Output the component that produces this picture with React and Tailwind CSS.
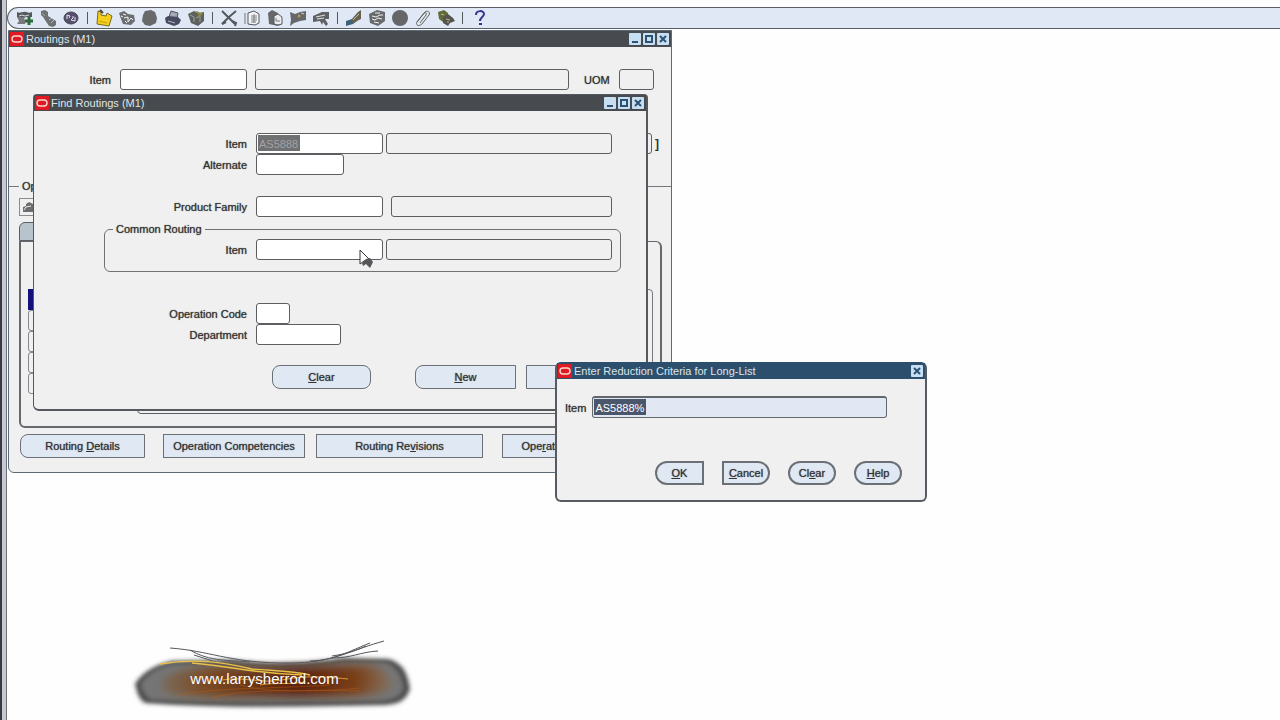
import clsx from "clsx";

const INK = "#55585c";

// Toolbar glyphs, all drawn on an 18x18 grid
const toolbarItems = [
  {
    name: "New",
    art: (
      <>
        <path d="M1 3c3 2 6-1 9 0s4 1 6 0v5H1z" fill={INK} />
        <path d="M1 8h9l-2 2 2 2-1 3H1l2-3z" fill="#77797c" />
        <path d="M3 7l3-1 3 1 4-1" stroke="#d5d9de" fill="none" />
        <path d="M13 8v8M9 12h8" stroke="#2c6a3b" strokeWidth="3" />
      </>
    ),
  },
  {
    name: "Find",
    art: (
      <>
        <path d="M2 2l4-1 3 2v4l8 5v4l-3 2-4-1-6-9-2-2z" fill="#6f7173" />
        <path d="M10 11l3-2M12 14l3-3" stroke="#b9bcc0" />
        <path d="M3 4l3 3" stroke="#9da0a3" />
      </>
    ),
  },
  {
    name: "Show Navigator",
    art: (
      <>
        <ellipse cx="9" cy="9" rx="7" ry="6" fill="#56506e" stroke="#44464e" />
        <path d="M5 10V6l3 1-1 2M13 8v4l-4-1 2-2V7" stroke="#e5e3f5" fill="none" />
      </>
    ),
  },
  { separator: true, name: "sep-1" },
  {
    name: "Save",
    art: (
      <>
        <path d="M3 2l3 1v3l5 1 1-3 5 3-3 10-12-2z" fill="#f5cf1e" stroke="#77691f" />
        <path d="M4 12l8 2" stroke="#c79d16" />
        <path d="M5 1l3 3" stroke="#4a4a3c" strokeWidth="2" />
      </>
    ),
  },
  {
    name: "Next Step",
    art: (
      <>
        <path d="M1 4l5-2 4 3 6 1 1 6-4 4-8-1-2-5z" fill="#6c6e70" />
        <path d="M5 5l3 1M6 9l4-1v5l3-4 2 2M7 12l2 2M3 7l2 1" stroke="#f1f3f6" fill="none" />
      </>
    ),
  },
  {
    name: "Switch Responsibility",
    art: <path d="M4 2l6-1 4 2 2 6-1 5-6 3-5-1-3-4 1-6z" fill="#67696b" />,
  },
  {
    name: "Print",
    art: (
      <>
        <path d="M5 8l2-6 7 2-1 6z" fill="#9fa2b0" stroke="#53545f" />
        <path d="M1 9l3-2 10 1 3 3-2 4-5 2-8-3z" fill="#484a60" />
        <path d="M4 12l7 2M7 5l4 1" stroke="#b4b8cc" />
      </>
    ),
  },
  {
    name: "Close Form",
    art: (
      <>
        <path d="M1 5l6-3 5 2 5-1v9l-6 5-7-3z" fill="#5c605e" />
        <path d="M3 6l4 2v5M9 9l4-2v6" stroke="#9da29b" fill="none" />
        <path d="M9 3l5 2-3 3" stroke="#8f8b45" strokeWidth="2" fill="none" />
      </>
    ),
  },
  { separator: true, name: "sep-2" },
  {
    name: "Cut",
    art: (
      <>
        <path d="M2 2l6 6 7 7M16 2L9 8l-7 7" stroke={INK} strokeWidth="2" fill="none" />
        <path d="M2 15l4-2M12 12l4 2-1 3" stroke={INK} strokeWidth="2" fill="none" />
      </>
    ),
  },
  {
    name: "Copy",
    art: (
      <>
        <path d="M2 4v11" stroke="#77797c" />
        <path d="M5 4l6-2 5 3v9l-4 2-7-1z" fill="#f4f5f7" stroke={INK} />
        <path d="M8 7h6M8 9h6M8 11h6M8 13h5M11 5v9" stroke="#7e8083" />
      </>
    ),
  },
  {
    name: "Paste",
    art: (
      <>
        <path d="M2 4l4-3 6 3v4l4 1v6l-4 2-9-2z" fill="#66686a" />
        <path d="M8 7l4-2 4 3v7l-4 1-4-1z" fill="#eceef0" stroke={INK} />
        <path d="M10 9v3h4" stroke="#77797c" fill="none" />
      </>
    ),
  },
  {
    name: "Clear Record",
    art: (
      <>
        <path d="M1 3l5 2 5-2 6-1v9l-6 1-6 2-4 3 1-6z" fill="#65676a" />
        <path d="M9 5l3 2-3 2" fill="#c09a57" />
        <path d="M12 4l3 1" stroke="#c9ccd0" />
      </>
    ),
  },
  {
    name: "Delete",
    art: (
      <>
        <path d="M1 7l9-4 7 0v7h-4l3 5-2 2-3-4-1 3-2-4-7 1z" fill="#5f6163" />
        <path d="M4 8l9-2M5 10l7-1" stroke="#e0e3e7" />
      </>
    ),
  },
  { separator: true, name: "sep-3" },
  {
    name: "Edit Field",
    art: (
      <>
        <path d="M1 12l6-2 5 2-4 3-7 2z" fill="#3f6079" />
        <path d="M6 11l7-8 3-2v9l-8 4z" fill="#67624f" />
        <path d="M8 11l6-6" stroke="#c1bda9" />
      </>
    ),
  },
  {
    name: "Zoom",
    art: (
      <>
        <path d="M1 5l8-4 8 2v9l-7 5-8-3z" fill="#68696b" />
        <path d="M4 7l4 1 4-2 3 0M4 10l3 1 3-2 4 1M6 13l5 1M7 4l5 0" stroke="#f0f2f4" fill="none" />
      </>
    ),
  },
  { name: "Translations", art: <circle cx="9" cy="9" r="8" fill="#646668" /> },
  {
    name: "Attachments",
    art: (
      <path
        d="M3 13L11 3c2-2 6 0 4 3l-7 9c-3 3-7 1-5-2l7-9c2-1 3 0 2 2l-6 8"
        stroke="#65635c"
        fill="none"
      />
    ),
  },
  {
    name: "Folder Tools",
    art: (
      <>
        <path d="M1 3l6-2 4 3v5l-5 4-4-3z" fill="#626a3a" />
        <path d="M6 8l5-3 5 4 2 3-5 2-2 3-5-3z" fill="#55534d" />
        <path d="M4 5l3 1M9 10l4 1M11 12v2" stroke="#b7b98f" fill="none" />
      </>
    ),
  },
  { separator: true, name: "sep-4" },
  {
    name: "Window Help",
    art: (
      <>
        <path
          d="M6 6c0-5 8-5 8-1 0 3-4 3-4 7"
          stroke="#33348c"
          strokeWidth="2"
          fill="none"
        />
        <path d="M9 14h3v2H9z" fill="#33348c" />
      </>
    ),
  },
];

function Toolbar() {
  return (
    <header className="flex h-[22px] items-center rounded-l-xl border border-r-0 border-[#5b6066] bg-[#dfe8f4] pl-2">
      {toolbarItems.map((item) =>
        item.separator ? (
          <span key={item.name} className="ml-[2px] mr-[7px] h-3 w-px bg-[#55585c]" />
        ) : (
          <button key={item.name} type="button" title={item.name} aria-label={item.name} className="mr-[5px] shrink-0">
            <svg viewBox="0 0 18 18" className="h-[18px] w-[18px]">
              {item.art}
            </svg>
          </button>
        )
      )}
    </header>
  );
}

function OracleMark() {
  return (
    <svg viewBox="0 0 14 14" className="h-[14px] w-[14px] shrink-0">
      <rect width="14" height="14" fill="#e01a22" />
      <rect x="2" y="4" width="10" height="6" rx="3" fill="none" stroke="#f7d9cf" strokeWidth="1.4" />
    </svg>
  );
}

function WindowControl({ label, children }) {
  return (
    <button type="button" aria-label={label} className="h-3 w-3 rounded-[1px] bg-[#c6dff2]">
      <svg viewBox="0 0 12 12" className="h-3 w-3" stroke="#2d5273" strokeWidth="2" fill="none">
        {children}
      </svg>
    </button>
  );
}

function TitleBar({ title, closeOnly, className }) {
  return (
    <div className={clsx("flex h-4 items-center gap-[2px] pl-px pr-[2px]", className)}>
      <OracleMark />
      <h2 className="flex-1 truncate text-[11px] leading-4 text-[#dfe4e8]">{title}</h2>
      <div className="flex gap-[2px]">
        {!closeOnly && (
          <>
            <WindowControl label="Minimize">
              <path d="M3 9h6" />
            </WindowControl>
            <WindowControl label="Maximize">
              <path d="M3 3h6v6H3z" />
            </WindowControl>
          </>
        )}
        <WindowControl label="Close">
          <path d="M3 3l6 6M9 3l-6 6" />
        </WindowControl>
      </div>
    </div>
  );
}

const labelText = "text-[11px] leading-[15px] text-[#333] [text-shadow:0_0_1px_#555]";

function Label({ htmlFor, className, children }) {
  return (
    <label htmlFor={htmlFor} className={clsx("mr-[9px] shrink-0 pt-[2px] text-right", labelText, className)}>
      {children}
    </label>
  );
}

function TextField({ id, className, readOnly, ...rest }) {
  return (
    <input
      id={id}
      type="text"
      readOnly={readOnly}
      className={clsx(
        "h-[21px] shrink-0 rounded-[3px] border border-[#5c5e61] px-[2px] text-[11px] outline-none",
        readOnly ? "bg-[#f0f0f0]" : "bg-white",
        className
      )}
      {...rest}
    />
  );
}

function FormButton({ className, children, ...rest }) {
  return (
    <button
      type="button"
      className={clsx(
        "h-6 shrink-0 border border-[#6b7076] bg-[#dfe8f3] whitespace-nowrap",
        labelText,
        className
      )}
      {...rest}
    >
      {children}
    </button>
  );
}

function RoutingsWindow() {
  return (
    <section className="absolute left-[1px] top-[1px] w-[664px] rounded-b-md border border-[#5b6b78] bg-[#f0f0f0]">
      <TitleBar title="Routings (M1)" className="bg-[#474b4f]" />
      <div className="flex items-center pt-[22px]">
        <Label htmlFor="routing-item" className="w-[102px]">Item</Label>
        <TextField id="routing-item" className="w-[127px]" />
        <TextField aria-label="Item description" className="ml-2 w-[314px]" readOnly />
        <Label htmlFor="uom" className="ml-[15px]">UOM</Label>
        <TextField id="uom" className="w-[35px]" readOnly />
      </div>
      <div className="mt-[43px] flex items-center justify-end pr-3">
        <TextField aria-label="Revision date" className="w-[140px]" readOnly />
        <span className="ml-[3px] text-xs font-bold text-[#333]">]</span>
      </div>

      <fieldset className="mt-[25px] border-t border-[#77797c] pl-[10px] pr-[9px]">
        <legend className={clsx("px-[3px]", labelText)}>Operations</legend>
        <button type="button" aria-label="Folder" className="mt-[4px] flex h-[18px] w-[18px] items-center justify-center border border-[#8a8c8f]">
          <svg viewBox="0 0 14 14" className="h-[14px] w-[14px]">
            <path d="M2 12V7l3-1V4l3-2 4 2v8z" fill="#6b6d70" />
            <path d="M3 10l2-3 5-1" stroke="#eee" fill="none" />
          </svg>
        </button>
        <div className="mt-[6px] h-[19px] w-[60px] rounded-tl-md border border-[#5c6064] bg-[#b8c4cc]" />
        <div className="rounded-b-md rounded-tr-md border-2 border-t border-[#65686c] px-[7px] pb-[12px] pt-[47px]">
          <div className="flex justify-between">
            <div className="flex flex-col">
              <input aria-label="Operation row 1" className="h-[21px] w-[60px] bg-[#14127a]" />
              {[2, 3, 4, 5].map((row) => (
                <input key={row} aria-label={`Operation row ${row}`} className="h-[21px] w-[60px] rounded-[3px] border border-[#85878a]" />
              ))}
            </div>
            <div className="w-[10px] rounded border border-[#77797c]" />
          </div>
          <div className="ml-[109px] mt-[10px] h-[10px] w-[480px] rounded-bl border border-[#5c6064]" />
        </div>
      </fieldset>

      <div className="flex overflow-hidden pb-[14px] pl-[11px] pt-[6px]">
        <FormButton className="w-[125px] rounded-l-lg">Routing <u>D</u>etails</FormButton>
        <FormButton className="ml-[18px] w-[142px]">Operation Competencies</FormButton>
        <FormButton className="ml-[11px] w-[167px]">Routing Re<u>v</u>isions</FormButton>
        <FormButton className="ml-[19px] w-[124px]">Ope<u>r</u>ation Details</FormButton>
      </div>
    </section>
  );
}

function FindRoutingsWindow() {
  return (
    <section className="absolute left-[26px] top-[65px] w-[615px] rounded-b-md rounded-t border border-b-2 border-r-2 border-[#55595e] bg-[#f0f0f0]">
      <TitleBar title="Find Routings (M1)" className="bg-[#474b4f]" />
      <div className="flex items-center pt-[22px]">
        <Label htmlFor="find-item" className="w-[213px]">Item</Label>
        <TextField
          id="find-item"
          defaultValue="AS5888"
          className="w-[127px] bg-[linear-gradient(#6f7071,#6f7071)] bg-[length:42px_16px] bg-[position:1px_1px] bg-no-repeat text-[#a2a3a4]"
        />
        <TextField aria-label="Find item description" className="ml-[3px] w-[226px]" readOnly />
      </div>
      <div className="flex items-center">
        <Label htmlFor="alternate" className="w-[213px]">Alternate</Label>
        <TextField id="alternate" className="w-[88px]" />
      </div>
      <div className="mt-[21px] flex items-center">
        <Label htmlFor="family" className="w-[213px]">Product Family</Label>
        <TextField id="family" className="w-[127px]" />
        <TextField aria-label="Family description" className="ml-2 w-[221px]" readOnly />
      </div>

      <fieldset className="ml-[70px] mt-[5px] w-[517px] rounded-md border border-[#6f7174] pb-[11px]">
        <legend className={clsx("ml-2 px-[3px]", labelText)}>Common Routing</legend>
        <div className="flex items-center pt-[2px]">
          <Label htmlFor="common-item" className="w-[142px]">Item</Label>
          <TextField id="common-item" className="w-[127px]" />
          <TextField aria-label="Common item description" className="ml-[3px] w-[226px]" readOnly />
        </div>
      </fieldset>

      <div className="mt-[31px] flex items-center">
        <Label htmlFor="op-code" className="w-[213px]">Operation Code</Label>
        <TextField id="op-code" className="w-[34px]" />
      </div>
      <div className="flex items-center">
        <Label htmlFor="department" className="w-[213px]">Department</Label>
        <TextField id="department" className="w-[85px]" />
      </div>

      <div className="mt-[20px] flex pb-5 pl-[238px]">
        <FormButton className="w-[99px] rounded-lg"><u>C</u>lear</FormButton>
        <FormButton className="ml-[44px] w-[101px] rounded-l-lg"><u>N</u>ew</FormButton>
        <FormButton className="ml-[10px] w-[99px] rounded-r-lg" aria-label="Find" />
      </div>

      {/* mouse pointer */}
      <svg viewBox="0 0 16 20" className="absolute left-[325px] top-[154px] h-5 w-4">
        <path d="M1 1v14l4-3 5-2z" fill="#fff" stroke="#333" />
        <path d="M3 14l4-4 4-1 3 4-3 6-4-4-3 2z" fill="#55575a" />
      </svg>
    </section>
  );
}

function CriteriaDialog() {
  const dialogButton = "border-2 border-[#5c6065]";
  return (
    <section
      role="dialog"
      aria-label="Enter Reduction Criteria for Long-List"
      className="absolute left-[548px] top-[333px] w-[372px] rounded-md border-2 border-t border-t-[#2b4f6d] border-[#565b61] bg-[#f0f0f0]"
    >
      <TitleBar title="Enter Reduction Criteria for Long-List" closeOnly className="bg-[#2b4f6d]" />
      <div className="flex items-center pl-[8px] pt-[17px]">
        <label htmlFor="criteria" className={clsx("mr-[6px] pt-[2px]", labelText)}>Item</label>
        <input
          id="criteria"
          type="text"
          defaultValue="AS5888%"
          className="h-[22px] w-[295px] rounded-[3px] border border-t-2 border-[#63676c] bg-[#e1e8f3] bg-[linear-gradient(#4a566b,#4a566b)] bg-[length:52px_16px] bg-[position:1px_1px] bg-no-repeat px-[2px] text-[11px] text-white outline-none"
        />
      </div>
      <div className="mt-[43px] flex justify-end gap-[18px] pb-[15px] pr-[23px]">
        <FormButton className={clsx(dialogButton, "w-[49px] rounded-l-xl")}><u>O</u>K</FormButton>
        <FormButton className={clsx(dialogButton, "w-[48px] rounded-r-xl")}><u>C</u>ancel</FormButton>
        <FormButton className={clsx(dialogButton, "w-[48px] rounded-xl")}>Cl<u>e</u>ar</FormButton>
        <FormButton className={clsx(dialogButton, "w-[48px] rounded-xl")}><u>H</u>elp</FormButton>
      </div>
    </section>
  );
}

function SiteBanner() {
  return (
    <footer className="absolute bottom-0 left-[103px] flex h-[90px] w-[320px] items-center justify-center">
      <svg viewBox="0 0 320 90" className="absolute inset-0 h-full w-full">
        <defs>
          <linearGradient id="ember">
            <stop offset="0" stopColor="#7a6a58" />
            <stop offset="0.2" stopColor="#7a4a22" />
            <stop offset="0.6" stopColor="#5c2009" />
            <stop offset="0.85" stopColor="#7a4018" />
            <stop offset="1" stopColor="#857260" />
          </linearGradient>
          <filter id="soft" x="-10%" y="-30%" width="120%" height="160%">
            <feGaussianBlur stdDeviation="2" />
          </filter>
          <filter id="softer" x="-10%" y="-50%" width="120%" height="200%">
            <feGaussianBlur stdDeviation="4" />
          </filter>
        </defs>
        <path
          d="M25 54C32 42 46 35 62 31l60-1c40 5 80 3 112-2l44 1c16 4 20 16 22 30-4 12-12 15-25 16-70 1-160 4-240-2-7-4-8-12-10-19z"
          fill="#4c4c4c"
          filter="url(#soft)"
        />
        <path
          d="M30 55C37 43 48 37 63 34l60 0c40 4 78 3 110-2l42 0c13 4 17 15 19 27-4 8-10 11-21 12-70 2-150 3-232-1-6-4-8-8-11-15z"
          fill="#747474"
          filter="url(#soft)"
        />
        <path
          d="M52 52c10-12 30-14 64-15 50 4 90-2 146-1 14 4 22 14 18 22-10 8-40 8-104 8-50 0-90 2-114-2-8-2-12-8-10-12z"
          fill="url(#ember)"
          filter="url(#softer)"
        />
        <path
          d="M70 65c40-8 90-6 150-10M100 68c50-12 90-4 150-10M130 55c40 10 70 4 120 6"
          stroke="#b4590f"
          strokeOpacity="0.5"
          fill="none"
        />
        <path
          d="M60 18c40 3 58 14 110 15 50 1 62-9 90-20M80 20c20 12 40 10 60 12M200 31c24 0 44-12 74-20M222 28c20 0 28-6 46-7M84 25l22 7M222 26c14-2 26-6 34-10"
          stroke="#55585c"
          fill="none"
        />
        <path
          d="M50 34c36-6 62-2 92 5 24 2 40 2 58 6M82 33c46 4 56 10 110 12"
          stroke="#e8c04a"
          strokeWidth="1.4"
          fill="none"
        />
        <path d="M112 50c20-4 40 4 60 0s36-4 66-1M150 55c16-3 30 0 44-3" stroke="#d99a2b" fill="none" />
      </svg>
      <a href="#site" className="relative mr-[11px] mt-[7px] text-[15px] leading-5 text-white">
        www.larrysherrod.com
      </a>
    </footer>
  );
}

export default function App() {
  return (
    <div className="flex min-h-screen w-full overflow-hidden bg-[#fefefe] font-['Liberation_Sans',Arial,sans-serif]">
      <div className="w-[7px] shrink-0 border-l-2 border-r border-l-[#3a3a40] border-r-[#6d7076] bg-[#c4c9d4]" />
      <main className="flex min-w-0 flex-1 flex-col pt-[7px]">
        <Toolbar />
        <div className="relative flex-1">
          <RoutingsWindow />
          <FindRoutingsWindow />
          <CriteriaDialog />
          <SiteBanner />
        </div>
      </main>
    </div>
  );
}
